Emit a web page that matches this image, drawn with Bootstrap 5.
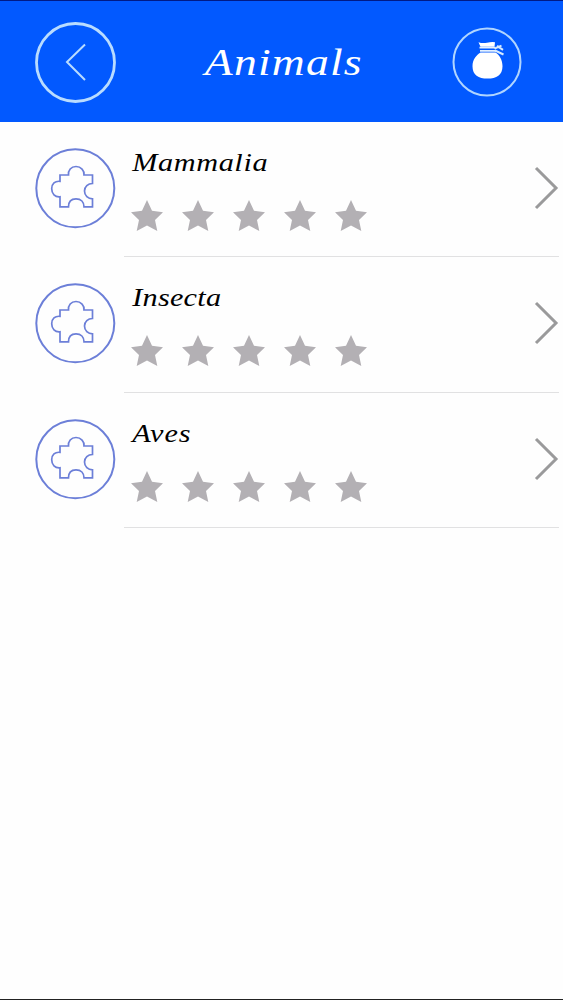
<!DOCTYPE html>
<html lang="en">
<head>
<meta charset="utf-8">
<meta name="viewport" content="width=device-width, initial-scale=1">
<title>Animals</title>
<link href="https://cdn.jsdelivr.net/npm/bootstrap@5.3.0/dist/css/bootstrap.min.css" rel="stylesheet">
<style>
body { background: #fefefe; height: 1000px; overflow: hidden; border-bottom: 1px solid #222; font-family: "Lucida Calligraphy", "Liberation Serif", serif; font-style: italic; }
.topbar { height: 122px; background: #0259ff; border-top: 1px solid #001a86; padding: 1px 40px 0 34px; }
.topbar h1 { font-size: 38px; letter-spacing: 1px; line-height: 48px; transform: scaleX(1.2); }
.topic { height: 135.4px; padding-left: 34px; color: #000; }
.piece { margin-top: 25px; }
.detail { margin-left: 8px; margin-right: 4px; padding: 25px 0 0 7px; border-bottom: 1.5px solid #e1e1e2; }
.topic-name { font-size: 25px; line-height: 32px; white-space: nowrap; letter-spacing: .5px; transform: scaleX(1.21); transform-origin: 0 50%; padding-left: 1px; }
.stars { gap: 19px; margin-top: 21px; }
.chevron { margin: 19px 0 0; }
svg { display: block; flex: none; }
</style>
</head>
<body class="d-flex flex-column">
<svg width="0" height="0" class="position-absolute" aria-hidden="true">
  <symbol id="star" viewBox="0 0 32 32"><path fill="#b3b0b4" d="M16 0l5 10.700 11 1.500-8 7.700L26.300 31 16 25.600 5.700 31 8 19.900 0 12.200l11-1.500z"/></symbol>
  <symbol id="puzzle" viewBox="0 0 82 82"><g fill="none" stroke="#6c7fd8"><circle cx="41.300" cy="41.300" r="39" stroke-width="2"/><path stroke-width="1.700" d="M26 28h8.500C34 23.500 37 19.500 42 19.500s8.500 4 8 8.500H58.500v8.500C54 36.500 50.500 39.500 50.500 44s3.500 7.800 8 7.800v8H50C50 55 47 51.800 42 51.800S34.500 55 34.500 59.800H26v-10c-5 .5-8.300-3-8.300-8s3.300-8 8.300-7.500z"/></g></symbol>
  <symbol id="next" viewBox="0 0 26 44"><path fill="none" stroke="#9a9a9b" stroke-width="3" d="M3 2l20 20L3 42"/></symbol>
</svg>
<header class="topbar d-flex align-items-center justify-content-between flex-shrink-0">
  <a href="#" aria-label="Back"><svg width="83" height="83" viewBox="0 0 83 83" fill="none" stroke="#b9dcff"><circle cx="41.500" cy="41.500" r="39" stroke-width="2.800"/><path stroke-width="2" d="M51 23.500L33 41l18 18"/></svg></a>
  <h1 class="m-0 fw-normal text-white">Animals</h1>
  <a href="#" aria-label="Coins"><svg width="72" height="72" viewBox="0 0 72 72"><circle cx="36" cy="36" r="33.500" fill="none" stroke="#b0d5ff" stroke-width="2"/><path fill="#fff" d="M27.500 16.200q4 1.500 8.500 .5t8-.5l-.5 4.500H29.500zM29.500 26.500h15c4 2.500 7 7.500 7 13.700 0 9-6 12.300-15 12.300s-15-3.300-15-12.300c0-6.700 4-11.200 8-13.700z"/><path d="M28.500 21.700h16M29 24.800h16" stroke="#e4f1ff" stroke-width="1.800"/><path d="M43.500 22.700l7-3M44 24.500l8.500 4M46 19.800l6 4" stroke="#d6eaff" stroke-width="2"/></svg></a>
</header>
<main>
  <a href="#" class="topic d-flex text-decoration-none">
    <svg class="piece" width="82" height="82"><use href="#puzzle"/></svg>
    <div class="detail d-flex justify-content-between flex-grow-1">
      <div><div class="topic-name">Mammalia</div>
        <div class="stars d-flex"><svg width="32" height="32"><use href="#star"/></svg><svg width="32" height="32"><use href="#star"/></svg><svg width="32" height="32"><use href="#star"/></svg><svg width="32" height="32"><use href="#star"/></svg><svg width="32" height="32"><use href="#star"/></svg></div></div>
      <svg class="chevron" width="26" height="44"><use href="#next"/></svg>
    </div>
  </a>
  <a href="#" class="topic d-flex text-decoration-none">
    <svg class="piece" width="82" height="82"><use href="#puzzle"/></svg>
    <div class="detail d-flex justify-content-between flex-grow-1">
      <div><div class="topic-name" style="letter-spacing:.2px">Insecta</div>
        <div class="stars d-flex"><svg width="32" height="32"><use href="#star"/></svg><svg width="32" height="32"><use href="#star"/></svg><svg width="32" height="32"><use href="#star"/></svg><svg width="32" height="32"><use href="#star"/></svg><svg width="32" height="32"><use href="#star"/></svg></div></div>
      <svg class="chevron" width="26" height="44"><use href="#next"/></svg>
    </div>
  </a>
  <a href="#" class="topic d-flex text-decoration-none">
    <svg class="piece" width="82" height="82"><use href="#puzzle"/></svg>
    <div class="detail d-flex justify-content-between flex-grow-1">
      <div><div class="topic-name" style="letter-spacing:.8px">Aves</div>
        <div class="stars d-flex"><svg width="32" height="32"><use href="#star"/></svg><svg width="32" height="32"><use href="#star"/></svg><svg width="32" height="32"><use href="#star"/></svg><svg width="32" height="32"><use href="#star"/></svg><svg width="32" height="32"><use href="#star"/></svg></div></div>
      <svg class="chevron" width="26" height="44"><use href="#next"/></svg>
    </div>
  </a>
</main>
<script src="https://cdn.jsdelivr.net/npm/bootstrap@5.3.0/dist/js/bootstrap.bundle.min.js"></script>
</body>
</html>
